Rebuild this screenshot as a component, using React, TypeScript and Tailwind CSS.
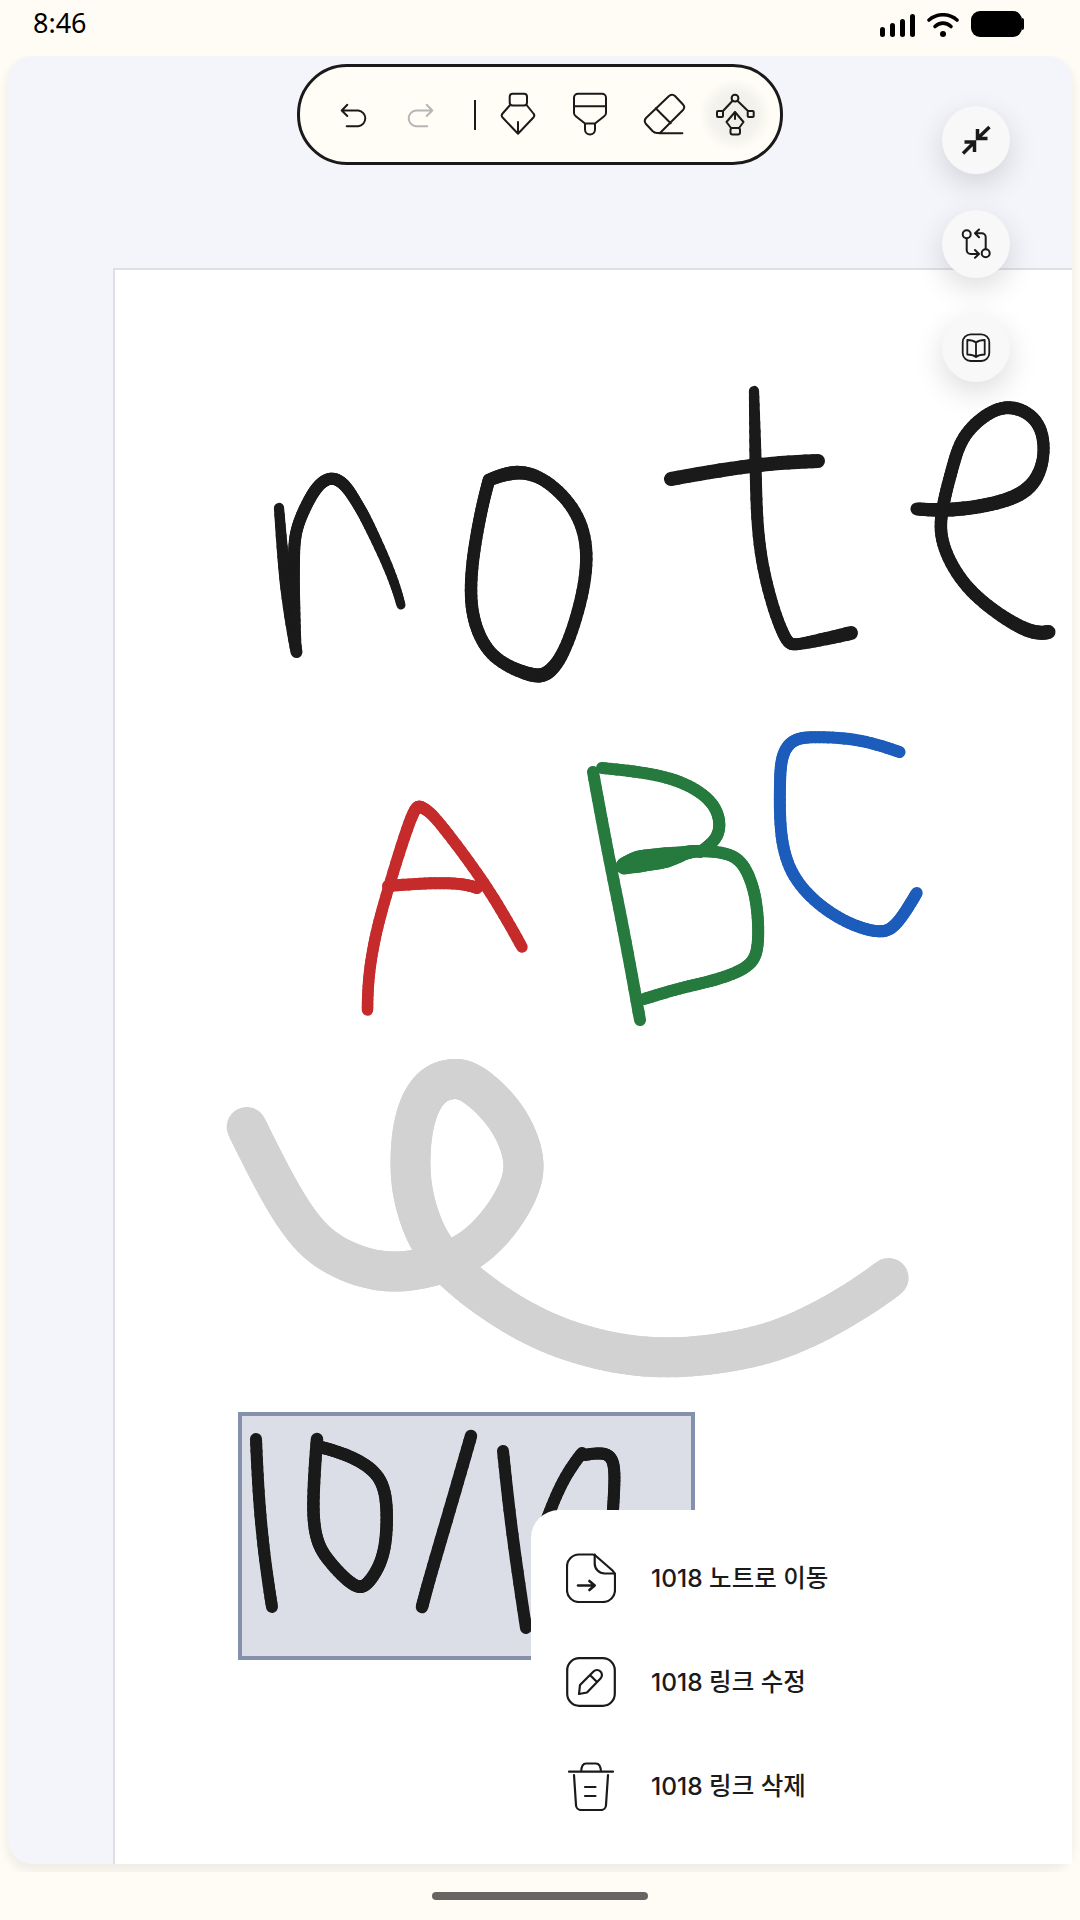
type Pt = [number, number, number?];

interface InkStroke {
  color: string;
  width: number;
  points: Pt[];
}

const BLACK = "#1a1a1a";
const RED = "#c62b2b";
const GREEN = "#267a3e";
const BLUE = "#1c5cbb";
const GRAY = "#d2d2d2";

// all stroke points are in page coordinates, third value overrides the pen width
const strokes: InkStroke[] = [
  {
    color: GRAY,
    width: 40,
    points: [
      [246.7, 1127], [269.7, 1173], [297, 1220], [329, 1253], [380, 1272], [426, 1268], [467, 1253], [499, 1223],
      [522, 1183], [522, 1150], [504, 1113], [472, 1083], [451, 1079], [430, 1088], [414, 1120], [410, 1173],
      [419, 1217], [439.6, 1257], [485.5, 1297], [540.6, 1330], [600, 1350], [660, 1358], [724, 1353],
      [788.5, 1337], [852.8, 1303], [888.6, 1278],
    ],
  },
  // note
  {
    color: BLACK,
    width: 11,
    points: [[279, 508, 10], [286, 590, 12], [296.5, 652, 12]],
  },
  {
    color: BLACK,
    width: 12,
    points: [
      [296, 650, 11], [294, 600, 12], [294, 560, 12], [296, 530, 12], [309, 500, 12], [320, 484, 12], [332, 478, 12],
      [345, 485, 12], [358, 505, 11], [368, 523, 11], [391, 573, 10], [401, 605, 9],
    ],
  },
  {
    color: BLACK,
    width: 12.5,
    points: [
      [489, 480], [514, 472, 14], [542, 478], [573, 507], [587, 547], [582, 597], [565, 650], [548, 673, 14], [531, 675, 14],
      [497, 660], [478, 633], [470.5, 597], [474, 550], [483, 503], [489, 480],
    ],
  },
  {
    color: BLACK,
    width: 12,
    points: [[754, 391, 10], [755.6, 460, 12], [758, 537, 12], [770, 597, 12], [786, 640, 12], [800, 644, 12], [851, 633, 14]],
  },
  {
    color: BLACK,
    width: 13,
    points: [[671, 479, 14], [753, 465, 14], [818, 461, 14]],
  },
  {
    color: BLACK,
    width: 12.5,
    points: [
      [917, 509, 13], [952, 510, 14], [997, 503, 14], [1030.5, 488, 14], [1044, 457, 12], [1039, 423], [1014, 407, 13],
      [988.5, 413], [963, 437], [952, 470], [942, 510], [942, 543], [963, 583], [997, 613, 13], [1030.5, 632, 14],
      [1048.5, 632, 14],
    ],
  },
  // ABC
  {
    color: RED,
    width: 11.5,
    points: [
      [367.5, 1010], [368.7, 977], [376, 933], [390, 883], [412.7, 812, 12], [422, 808, 12], [435.7, 818], [470, 863],
      [497, 903], [522, 947],
    ],
  },
  {
    color: RED,
    width: 12,
    points: [[388, 886], [432, 883], [462.5, 884], [477, 888]],
  },
  {
    color: GREEN,
    width: 12,
    points: [[593, 772], [608, 853], [623, 927], [640, 1020]],
  },
  {
    color: GREEN,
    width: 12,
    points: [[602, 768], [646, 773], [684, 783], [713, 803], [720, 827], [713, 842], [700, 852]],
  },
  {
    color: GREEN,
    width: 12,
    points: [
      [624, 866, 16], [640, 861, 22], [665, 858, 21], [685, 853, 14], [700, 851, 12], [734, 855], [749.5, 877], [757, 907],
      [758, 947], [747.6, 967], [715, 980], [680.6, 988], [644, 999],
    ],
  },
  {
    color: BLUE,
    width: 12,
    points: [
      [899.5, 752], [860.5, 740], [818, 737], [793.5, 740], [782, 757], [780, 787], [781, 837], [793.5, 877], [822, 907],
      [853, 925], [879.6, 932], [893, 927], [904.5, 913], [916.7, 893],
    ],
  },
  // 10/18 inside the selection
  {
    color: BLACK,
    width: 12,
    points: [[256, 1439], [259, 1500], [265, 1560], [272, 1607]],
  },
  {
    color: BLACK,
    width: 12.5,
    points: [
      [317, 1439], [313, 1500], [316, 1537], [328, 1560], [355, 1587], [369, 1582], [383, 1557], [387, 1520], [383, 1483],
      [363, 1463], [338, 1452], [320, 1447],
    ],
  },
  {
    color: BLACK,
    width: 12.5,
    points: [[471, 1436], [452.6, 1500], [430, 1577], [422, 1607]],
  },
  {
    color: BLACK,
    width: 12,
    points: [[503, 1451], [512, 1533], [526, 1628]],
  },
  {
    color: BLACK,
    width: 12,
    points: [[582, 1453], [563, 1480], [546.5, 1520]],
  },
  {
    color: BLACK,
    width: 12,
    points: [[585, 1455], [604, 1453], [614, 1463], [614, 1493], [612, 1525]],
  },
];

// catmull-rom sampling plus a short moving average, so a few points are enough for a hand drawn line
function sample(points: Pt[], fallback: number) {
  const raw: { x: number; y: number; w: number }[] = [];
  for (let i = 0; i < points.length - 1; i++) {
    const p0 = points[Math.max(i - 1, 0)];
    const p1 = points[i];
    const p2 = points[i + 1];
    const p3 = points[Math.min(i + 2, points.length - 1)];
    const w1 = p1[2] ?? fallback;
    const w2 = p2[2] ?? fallback;
    for (let s = 0; s < 8; s++) {
      const t = s / 8;
      const t2 = t * t;
      const t3 = t2 * t;
      raw.push({
        x: 0.5 * (2 * p1[0] + (p2[0] - p0[0]) * t + (2 * p0[0] - 5 * p1[0] + 4 * p2[0] - p3[0]) * t2 + (3 * p1[0] - p0[0] - 3 * p2[0] + p3[0]) * t3),
        y: 0.5 * (2 * p1[1] + (p2[1] - p0[1]) * t + (2 * p0[1] - 5 * p1[1] + 4 * p2[1] - p3[1]) * t2 + (3 * p1[1] - p0[1] - 3 * p2[1] + p3[1]) * t3),
        w: w1 + (w2 - w1) * t,
      });
    }
  }
  const last = points[points.length - 1];
  raw.push({ x: last[0], y: last[1], w: last[2] ?? fallback });
  return raw.map((p, i) => {
    const r = Math.min(4, i, raw.length - 1 - i);
    const win = raw.slice(i - r, i + r + 1);
    return {
      x: win.reduce((a, q) => a + q.x, 0) / win.length,
      y: win.reduce((a, q) => a + q.y, 0) / win.length,
      w: p.w,
    };
  });
}

const Ink = ({ stroke }: { stroke: InkStroke }) => {
  const pts = sample(stroke.points, stroke.width);
  return (
    <g stroke={stroke.color} strokeLinecap="round" fill="none">
      {pts.slice(1).map((p, i) => (
        <line key={i} x1={pts[i].x} y1={pts[i].y} x2={p.x} y2={p.y} strokeWidth={p.w} />
      ))}
    </g>
  );
};

const Icon = ({ children, className = "" }: { children: React.ReactNode; className?: string }) => (
  <svg viewBox="0 0 48 48" fill="none" stroke="currentColor" strokeWidth={2} strokeLinecap="round" strokeLinejoin="round" className={`w-12 h-12 shrink-0 ${className}`}>
    {children}
  </svg>
);

const UndoPath = "M16.3 13.8 10.7 19.5 16.3 25M10.7 19.5H27.3a7.9 7.9 0 0 1 0 15.7H15.7";

const Toolbar = () => (
  <div className="absolute top-[8px] left-1/2 -translate-x-1/2 w-[486px] h-[101px] rounded-[50px] border-[3px] border-[#1a1a1a] bg-[#fffdf6] flex items-center pl-[31px] text-[#1a1a1a]">
    <Icon>
      <path d={UndoPath} />
    </Icon>
    <Icon className="ml-4 text-[#b5b5b5] -scale-x-100">
      <path d={UndoPath} />
    </Icon>
    <div className="w-[2px] h-[30px] bg-[#1a1a1a] ml-[31px]" />
    <Icon className="ml-[18px]">
      <rect x="15.7" y="2.8" width="17.3" height="11.7" rx="3" />
      <path d="M15.7 14.5 8.6 22.5a3 3 0 0 0 0 4L24 42.8 39.4 26.5a3 3 0 0 0 0-4L33 14.5M24 31V42.8" />
    </Icon>
    <Icon className="ml-6">
      <path d="M12 2.8H36a4 4 0 0 1 4 4V22a4 4 0 0 1-1.800 3.200L29 32.500H19L9.800 25.200A4 4 0 0 1 8 22V6.800a4 4 0 0 1 4-4ZM8 15.200H40M19 32.500V38.500a5 5 0 0 0 10 0V32.500" />
    </Icon>
    <Icon className="ml-[26px]">
      <path d="M29 5Q32.4 2.5 35 5L43 13.5Q45.5 16.2 43 19L20 42H17Q14.5 42 12.5 40L6 33Q3.5 30 6 27ZM15.7 17.2 30.7 32.2M19 42.2H42.4" />
    </Icon>
    <div className="w-[72px] h-[72px] -mr-3 ml-[11px] rounded-full flex items-center justify-center bg-[radial-gradient(circle,#eeede7_0%,#f3f2ec_45%,#fffdf6_72%)]">
      <Icon>
        <circle cx="24" cy="7.2" r="3.4" />
        <rect x="6" y="20" width="6" height="6" rx="1" />
        <rect x="36.7" y="20" width="6" height="6" rx="1" />
        <path d="M21.6 9.8 12 20M26.4 9.8 37 20M24 21 15.5 31 20 37H28L32.5 31ZM24 21V28" />
        <rect x="19.5" y="37" width="9.5" height="6.5" rx="2" />
      </Icon>
    </div>
  </div>
);

const FabButton = ({ children }: { children: React.ReactNode }) => (
  <button className="w-[68px] h-[68px] rounded-full bg-[#f8f8f8] flex items-center justify-center text-[#1a1a1a] shadow-[0_10px_30px_rgba(0,0,0,0.14)]">
    {children}
  </button>
);

const Fabs = () => (
  <div className="absolute top-[50px] right-[62px] flex flex-col gap-9">
    <FabButton>
      <Icon>
        <path strokeWidth={3.500} strokeLinecap="butt" strokeLinejoin="miter" d="M37.500 11 25.500 22.500M25.500 13V22.500H35.500M11 37.500 22.500 26M12.500 26H22.500V36" />
      </Icon>
    </FabButton>
    <FabButton>
      <Icon>
        <circle cx="14.7" cy="14.3" r="4" />
        <circle cx="33.7" cy="33.3" r="4" />
        <path d="M14.7 18.5V30a4 4 0 0 0 4 4H27M23 30 27 34 23 37.7M33.7 29V17.3a4 4 0 0 0-4-4H23M27 9.5 23 13.3 27 17.3" />
      </Icon>
    </FabButton>
    <FabButton>
      <Icon>
        <rect x="10.7" y="10.3" width="26.6" height="26.7" rx="8" strokeWidth={1.8} />
        <path strokeWidth={1.8} d="M24 18.5C21.5 16.5 18.5 16 15.3 16V30.5C18.5 30.5 21.5 31 24 33 26.500 31 29.500 30.500 32.700 30.500V16C29.500 16 26.500 16.500 24 18.500ZM24 18.500V33" />
      </Icon>
    </FabButton>
  </div>
);

const MenuItem = ({ label, children }: { label: string; children: React.ReactNode }) => (
  <div className="flex items-center gap-[35px] h-[50px]">
    <svg viewBox="0 0 50 50" fill="none" stroke="currentColor" strokeWidth={2.2} strokeLinecap="round" strokeLinejoin="round" className="w-[50px] h-[50px] shrink-0">
      {children}
    </svg>
    <span className="text-[24.5px] font-medium text-[#1a1a1a] [font-family:Inter,'Noto_Sans_CJK_KR',sans-serif]">{label}</span>
  </div>
);

const ContextMenu = () => (
  <div className="absolute right-0 bottom-0 w-[541px] h-[354px] bg-white rounded-tl-[28px] pl-[35px] pt-[43px] flex flex-col gap-[54px] text-[#1a1a1a]">
    <MenuItem label="1018 노트로 이동">
      <path d="M13 1.5H26.500Q28.700 1.500 30.500 3.500L46.500 17.500Q49 20 49 23V37A12 12 0 0 1 37 49H13A12 12 0 0 1 1 37V13.500A12 12 0 0 1 13 1.500Z" />
      <path d="M28.700 1.500V10.500A10 10 0 0 0 38.700 20.500H49" />
      <path strokeWidth={2.6} d="M12 32.500H28.700M23.400 28 28.700 32.500 23.400 37" />
    </MenuItem>
    <MenuItem label="1018 링크 수정">
      <rect x="1.200" y="1.200" width="47.600" height="47.600" rx="12" />
      <path d="M13 37 14 28 27.500 14.500A4.900 4.900 0 0 1 34.500 21.500L21 35.500ZM24 18 31 25" />
    </MenuItem>
    <MenuItem label="1018 링크 삭제">
      <path d="M3 10.700H47M15.200 10.700Q15.500 2.500 20 2.500H30Q34.500 2.500 35 10.700M8 14 10 44A5 5 0 0 0 15 49H35A5 5 0 0 0 40 44L42 14M19 26H29.500M19 35H29.500" />
    </MenuItem>
  </div>
);

const StatusBar = () => (
  <div className="h-[56px] shrink-0 relative z-10 bg-[#fffcf5] flex items-start justify-between pl-[33px] pr-[56px] text-black">
    <span className="text-[27px] leading-[46px] [font-family:'Noto_Sans',sans-serif]">8:46</span>
    <div className="flex items-end gap-3 mt-[11px]">
      <div className="flex items-end gap-[5px] h-[24px]">
        <div className="w-[5px] h-[10px] rounded-full bg-black" />
        <div className="w-[5px] h-[14px] rounded-full bg-black" />
        <div className="w-[5px] h-[18px] rounded-full bg-black" />
        <div className="w-[5px] h-[23px] rounded-full bg-black" />
      </div>
      <svg viewBox="0 0 32 24" className="w-[32px] h-[24px]" fill="none" stroke="black" strokeWidth={3.6} strokeLinecap="round">
        <path d="M2 7C10 0 22 0 30 7" />
        <path d="M8 13.500C12.500 9 19.500 9 24 13.500" />
        <circle cx="16" cy="21" r="3" fill="black" stroke="none" />
      </svg>
      <div className="flex items-center">
        <div className="w-[51px] h-[26px] rounded-[9px] bg-black" />
        <div className="w-[2px] h-[12px] rounded-r-sm bg-black" />
      </div>
    </div>
  </div>
);

export default function App() {
  return (
    <div className="w-[1080px] h-[1920px] flex flex-col bg-[#fffcf5] overflow-hidden">
      <StatusBar />
      <main className="flex-1 mx-2 relative rounded-3xl bg-[#f4f4fb] shadow-[0_6px_10px_2px_rgba(0,0,0,0.06)] flex flex-col pl-[105px] pt-[212px]">
        <div className="flex-1 relative bg-white border-l-2 border-t-2 border-[#dfdfe5]">
          <div className="absolute left-[123px] top-[1142px] w-[457px] h-[248px] bg-[#dbdee7] border-4 border-[#8590ac]" />
          <svg viewBox="115 270 957 1594" className="absolute inset-0 w-full h-full">
            {strokes.map((s, i) => (
              <Ink key={i} stroke={s} />
            ))}
          </svg>
          <ContextMenu />
        </div>
        <Toolbar />
        <Fabs />
      </main>
      <div className="h-[48px] mt-2 shrink-0 relative z-10 bg-[#fffcf5] flex justify-center pt-[20px]">
        <div className="w-[216px] h-[8px] rounded-full bg-[#666561]" />
      </div>
    </div>
  );
}
